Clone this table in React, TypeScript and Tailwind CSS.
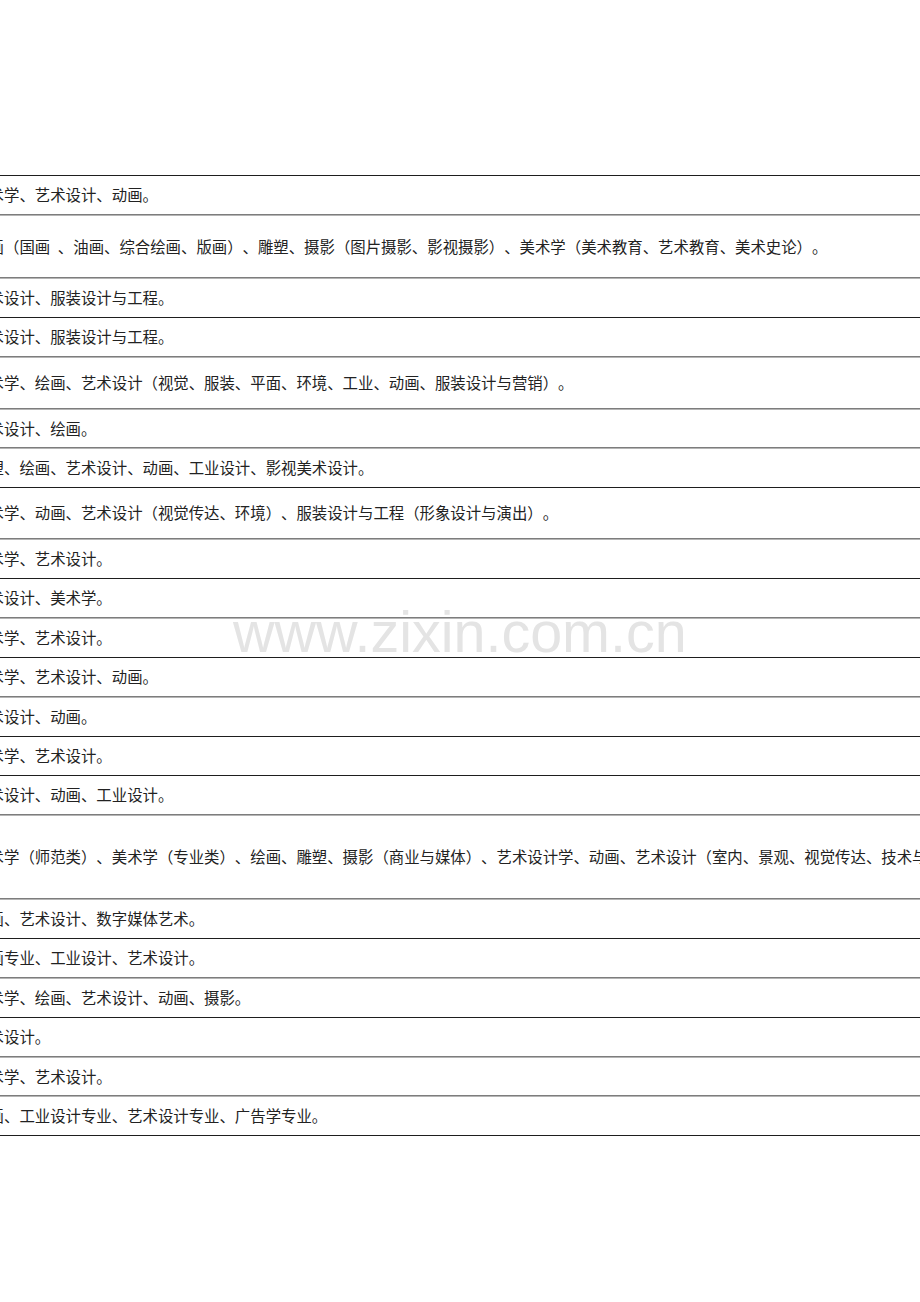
type Row = {
  text: string;
  line: "dark" | "gray";
  h: string;
};

const rows: Row[] = [
  { text: "术学、艺术设计、动画。", line: "dark", h: "h-[38px]" },
  {
    text: "画（国画\u2002、油画、综合绘画、版画）、雕塑、摄影（图片摄影、影视摄影）、美术学（美术教育、艺术教育、美术史论）。",
    line: "gray",
    h: "h-[61px]",
  },
  { text: "术设计、服装设计与工程。", line: "gray", h: "h-[38px]" },
  { text: "术设计、服装设计与工程。", line: "dark", h: "h-[38px]" },
  {
    text: "术学、绘画、艺术设计（视觉、服装、平面、环境、工业、动画、服装设计与营销）。",
    line: "gray",
    h: "h-[50px]",
  },
  { text: "术设计、绘画。", line: "gray", h: "h-[37px]" },
  { text: "塑、绘画、艺术设计、动画、工业设计、影视美术设计。", line: "gray", h: "h-[38px]" },
  {
    text: "术学、动画、艺术设计（视觉传达、环境）、服装设计与工程（形象设计与演出）。",
    line: "dark",
    h: "h-[50px]",
  },
  { text: "术学、艺术设计。", line: "gray", h: "h-[38px]" },
  { text: "术设计、美术学。", line: "dark", h: "h-[38px]" },
  { text: "术学、艺术设计。", line: "gray", h: "h-[38px]" },
  { text: "术学、艺术设计、动画。", line: "dark", h: "h-[38px]" },
  { text: "术设计、动画。", line: "gray", h: "h-[38px]" },
  { text: "术学、艺术设计。", line: "dark", h: "h-[38px]" },
  { text: "术设计、动画、工业设计。", line: "dark", h: "h-[38px]" },
  {
    text: "术学（师范类）、美术学（专业类）、绘画、雕塑、摄影（商业与媒体）、艺术设计学、动画、艺术设计（室内、景观、视觉传达、技术与艺术）。",
    line: "gray",
    h: "h-[82px]",
  },
  { text: "画、艺术设计、数字媒体艺术。", line: "gray", h: "h-[38px]" },
  { text: "画专业、工业设计、艺术设计。", line: "dark", h: "h-[38px]" },
  { text: "术学、绘画、艺术设计、动画、摄影。", line: "gray", h: "h-[38px]" },
  { text: "术设计。", line: "dark", h: "h-[38px]" },
  { text: "术学、艺术设计。", line: "gray", h: "h-[37px]" },
  { text: "画、工业设计专业、艺术设计专业、广告学专业。", line: "gray", h: "h-[38px]" },
];

const Line = ({ kind }: { kind: "dark" | "gray" }) =>
  kind === "dark" ? (
    <div className="h-px w-full bg-[#1e1e1e]" />
  ) : (
    <div className="w-full">
      <div className="h-px bg-[#7d7d7d]" />
      <div className="h-px bg-[#b5b5b5]" />
    </div>
  );

export default function App() {
  return (
    <div className="relative min-h-[1302px] w-[920px] overflow-hidden bg-white font-['Noto_Sans_CJK_SC',sans-serif] text-[#222]">
      <div className="pt-[175px]">
        {rows.map((row, i) => (
          <div key={i}>
            <Line kind={row.line} />
            <div className={`flex items-center overflow-hidden ${row.h}`}>
              <span className="-ml-[11.4px] whitespace-pre text-[15.4px] leading-none [text-spacing-trim:space-all] [font-feature-settings:'halt'_0,'chws'_0]">
                {row.text}
              </span>
            </div>
          </div>
        ))}
        <Line kind="dark" />
      </div>

      <div className="pointer-events-none absolute left-[233px] top-[604px] whitespace-nowrap font-['Liberation_Sans',Arial,sans-serif] text-[57.5px] leading-none text-[#e4e4e4]">
        www.zixin.com.cn
      </div>
    </div>
  );
}
